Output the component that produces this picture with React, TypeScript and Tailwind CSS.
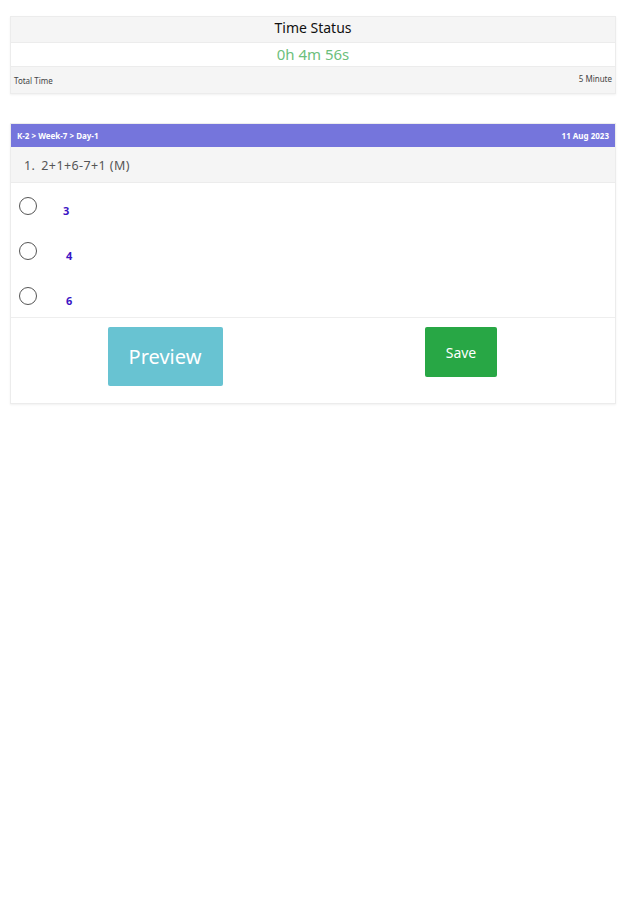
const options = ['3', '4', '6'];

export default function App() {
  return (
    <div className="min-h-[900px] bg-white px-[10px] pt-[16px] font-['Noto_Sans','Open_Sans',sans-serif]">
      {/* Time status */}
      <div className="border border-[#ececec] shadow-[0_1px_2px_rgba(0,0,0,0.06)]">
        <div className="flex h-[25px] items-center justify-center bg-[#f5f5f5] pb-[4px] text-[14px] text-[#111]">
          Time Status
        </div>
        <div className="flex h-[25px] items-center justify-center border-y border-[#ececec] bg-white text-[15px] text-[#6cbf7c]">
          0h 4m 56s
        </div>
        <div className="flex h-[26px] items-center justify-between bg-[#f5f5f5] px-[3px] text-[8px] text-[#444]">
          <span className="pt-[2px]">Total Time</span>
          <span className="-mt-[3px]">5 Minute</span>
        </div>
      </div>

      {/* Question card */}
      <div className="mt-[29px] border border-[#ececec] shadow-[0_1px_2px_rgba(0,0,0,0.06)]">
        <div className="flex h-[23px] items-center justify-between bg-[#7575dc] px-[6px] text-[8px] font-bold text-white">
          <span>K-2 &gt; Week-7 &gt; Day-1</span>
          <span>11 Aug 2023</span>
        </div>
        <div className="flex h-[36px] items-center border-b border-[#ececec] bg-[#f5f5f5] pl-[13px] pt-[3px] text-[12.5px] tracking-[0.4px] text-[#555]">
          <span>1.</span>
          <span className="ml-[6px]">2+1+6-7+1 (M)</span>
        </div>
        <div className="flex flex-col gap-[27px] pb-[12px] pt-[14px]">
          {options.map((o, i) => (
            <div key={o} className="flex h-[18px] items-start">
              <span className="ml-[8px] h-[18px] w-[18px] shrink-0 rounded-full border-[1.5px] border-[#555]" />
              <span className={`mt-[7px] text-[11px] font-bold leading-[14px] text-[#3b14c4] ${i === 0 ? 'ml-[26px]' : 'ml-[29px]'}`}>
                {o}
              </span>
            </div>
          ))}
        </div>
        <div className="grid grid-cols-2 border-t border-[#eeeeee] pb-[17px] pt-[9px]">
          <div className="flex justify-center">
            <button className="ml-[6px] h-[59px] w-[115px] rounded-[2px] bg-[#68c3d2] text-[20px] text-white">
              Preview
            </button>
          </div>
          <div className="flex justify-center">
            <button className="mr-[6px] h-[50px] w-[72px] rounded-[2px] bg-[#28a745] text-[14px] text-white">
              Save
            </button>
          </div>
        </div>
      </div>
    </div>
  );
}
